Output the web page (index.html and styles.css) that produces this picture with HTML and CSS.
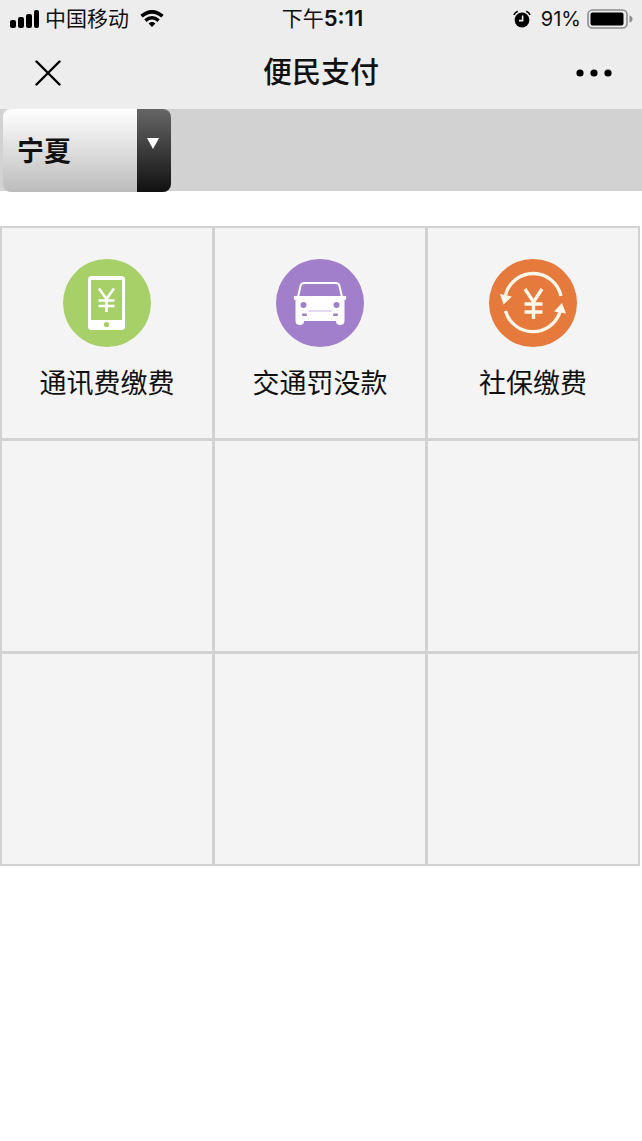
FILE: index.html
```
<!DOCTYPE html>
<html lang="zh-CN">
<head>
    <meta charset="UTF-8">
    <meta name="viewport" content="width=device-width, initial-scale=1.0">
    <title>便民支付</title>
    <link rel="stylesheet" href="styles.css">
</head>
<body>
    <header>
        <div class="status-bar">
            <div class="status-left">
                <svg class="signal" width="30" height="18" viewBox="0 0 30 18">
                    <rect x="0" y="10" width="6" height="8" rx="2"/>
                    <rect x="8" y="7" width="6" height="11" rx="2"/>
                    <rect x="16" y="4" width="6" height="14" rx="2"/>
                    <rect x="24" y="0" width="5" height="18" rx="2"/>
                </svg>
                <span>中国移动</span>
                <svg class="wifi" width="24" height="18" viewBox="0 0 24 18">
                    <path d="M1.5 6.2 Q12 -2.6 22.5 6.2" fill="none" stroke="#000" stroke-width="3.6"/>
                    <path d="M5.4 10.6 Q12 5 18.6 10.6" fill="none" stroke="#000" stroke-width="3.4"/>
                    <path d="M8.6 13.4 Q12 10.8 15.4 13.4 L12 17 Z"/>
                </svg>
            </div>
            <div class="status-time">下午<b>5:11</b></div>
            <div class="status-right">
                <svg class="alarm" width="18" height="18" viewBox="0 0 18 18">
                    <circle cx="9" cy="10" r="7.4"/>
                    <path d="M1 5 Q1.8 2.2 4.8 1.2 M17 5 Q16.2 2.2 13.2 1.2" fill="none" stroke="#000" stroke-width="1.6"/>
                    <path d="M9.6 5.6 V10.6 H6" fill="none" stroke="#ededed" stroke-width="1.6"/>
                </svg>
                <span class="percent">91%</span>
                <svg class="battery" width="46" height="20" viewBox="0 0 46 20">
                    <rect x="1" y="1" width="39" height="18" rx="4.5" fill="none" stroke="#8c8c8c" stroke-width="1.6"/>
                    <rect x="3.5" y="3.5" width="33" height="13" rx="2"/>
                    <path d="M42.5 6.5 Q45.5 7.5 45.5 10 Q45.5 12.5 42.5 13.5 Z" fill="#8c8c8c"/>
                </svg>
            </div>
        </div>
        <div class="nav-bar">
            <button type="button" class="close" aria-label="关闭">
                <svg width="26" height="26" viewBox="0 0 26 26">
                    <path d="M1.5 1.5 L24.5 24.5 M24.5 1.5 L1.5 24.5" stroke="#000" stroke-width="2.4" stroke-linecap="round"/>
                </svg>
            </button>
            <h1>便民支付</h1>
            <button type="button" class="more" aria-label="更多">
                <svg width="36" height="8" viewBox="0 0 36 8">
                    <circle cx="4" cy="4" r="3.6"/>
                    <circle cx="18" cy="4" r="3.6"/>
                    <circle cx="32" cy="4" r="3.6"/>
                </svg>
            </button>
        </div>
    </header>
    <div class="region-bar">
        <div class="region">
            <select id="region" aria-label="地区">
                <option selected>宁夏</option>
            </select>
            <span class="region-arrow">
                <svg width="12" height="11" viewBox="0 0 12 11"><path d="M0 0 H12 L6 11 Z" fill="#fff"/></svg>
            </span>
        </div>
    </div>
    <main class="grid">
        <a class="cell" href="#phone">
            <svg class="icon" viewBox="0 0 88 88">
                <circle cx="44" cy="44" r="44" fill="#a8d068"/>
                <rect x="25" y="17" width="37" height="54" rx="3.5" fill="#fff"/>
                <rect x="28" y="21" width="31" height="40" fill="#a8d068"/>
                <circle cx="43.5" cy="65.5" r="2.6" fill="#a8d068"/>
                <path d="M36 29.5 L43.5 40 L51 29.5 M43.5 40 V53 M35.5 41.5 H51.5 M35.5 47 H51.5" fill="none" stroke="#fff" stroke-width="2.6"/>
            </svg>
            <span>通讯费缴费</span>
        </a>
        <a class="cell" href="#traffic">
            <svg class="icon" viewBox="0 0 88 88">
                <circle cx="44" cy="44" r="44" fill="#a17fcb"/>
                <path d="M22 38 L24.5 27 Q25.2 24 28.5 24 H59.5 Q62.8 24 63.5 27 L66 38" fill="none" stroke="#fff" stroke-width="2"/>
                <path d="M18 37 H70 Q71 41 68.5 41 V62 Q68.5 66 64 66 Q60 66 60 62 H28 Q28 66 24 66 Q19.5 66 19.5 62 V41 Q17 41 18 37 Z" fill="#fff"/>
                <circle cx="27.5" cy="46" r="3" fill="#a17fcb"/>
                <circle cx="60.5" cy="46" r="3" fill="#a17fcb"/>
                <path d="M32 52 H56" stroke="#c7b3e1" stroke-width="1"/>
                <rect x="26" y="54.5" width="5" height="2.5" rx="1" fill="#a17fcb"/>
                <rect x="57" y="54.5" width="5" height="2.5" rx="1" fill="#a17fcb"/>
            </svg>
            <span>交通罚没款</span>
        </a>
        <a class="cell" href="#social">
            <svg class="icon" viewBox="0 0 88 88">
                <circle cx="44" cy="44" r="44" fill="#e67a3c"/>
                <g fill="none" stroke="#fff8ea" stroke-width="3.4">
                    <path d="M16.5 36 A28.5 28.5 0 0 1 72 37"/>
                    <path d="M16.5 52 A28.5 28.5 0 0 0 71 53"/>
                    <path d="M36 30 L44.5 43 L53 30 M44.5 43 V60 M35.5 45 H53.5 M35.5 53 H53.5"/>
                </g>
                <path d="M11 35 L23 37.5 L14.5 45.5 Z" fill="#fff8ea"/>
                <path d="M73 44 L77 54.5 L65 52.5 Z" fill="#fff8ea"/>
            </svg>
            <span>社保缴费</span>
        </a>
        <div class="cell"></div>
        <div class="cell"></div>
        <div class="cell"></div>
        <div class="cell"></div>
        <div class="cell"></div>
        <div class="cell"></div>
    </main>
</body>
</html>
```
FILE: styles.css
```
* {
    box-sizing: border-box;
}
body {
    font-family: Inter, "Noto Sans CJK SC", sans-serif;
    margin: 0;
    background: #fff;
    color: #111;
}
button {
    display: flex;
    padding: 0;
    border: none;
    background: none;
    cursor: pointer;
}
header {
    background: #ededed;
}
.status-bar {
    display: grid;
    grid-template-columns: 1fr auto 1fr;
    align-items: center;
    height: 36px;
    padding: 0 9px 0 10px;
    font-size: 21px;
    line-height: 36px;
}
.status-left,
.status-right {
    display: flex;
    align-items: center;
}
.status-left {
    gap: 5px;
}
.wifi {
    margin-left: 6px;
}
.status-time {
    padding-left: 2px;
}
.status-time b {
    font-size: 22px;
    font-weight: 600;
}
.status-right {
    justify-content: flex-end;
    gap: 6px;
}
.percent {
    margin-left: 4px;
    font-size: 20px;
}
.nav-bar {
    display: grid;
    grid-template-columns: 1fr auto 1fr;
    align-items: center;
    height: 73px;
    padding: 0 30px 2px;
}
.nav-bar h1 {
    margin: 0;
    font-size: 29px;
    font-weight: 500;
    line-height: 73px;
}
.close {
    margin-left: 5px;
}
.more {
    justify-self: end;
}
.region-bar {
    height: 82px;
    padding-left: 3px;
    background: #d2d2d2;
}
.region {
    position: relative;
    width: 168px;
    height: 83px;
    border-radius: 8px;
    overflow: hidden;
}
.region select {
    appearance: none;
    width: 100%;
    height: 100%;
    padding: 2px 40px 0 14px;
    border: none;
    border-radius: 0;
    background: linear-gradient(#fff, #bcbcbc);
    color: #111;
    font-family: inherit;
    font-size: 27px;
    font-weight: 700;
}
.region-arrow {
    position: absolute;
    top: 0;
    right: 0;
    display: flex;
    justify-content: center;
    width: 34px;
    height: 100%;
    padding: 29px 2px 0 0;
    background: linear-gradient(#666, #111);
    pointer-events: none;
}
.grid {
    display: grid;
    grid-template-columns: repeat(3, 1fr);
    gap: 3px;
    margin: 35px 2px 0 0;
    padding: 2px;
    background: #d2d2d2;
}
.cell {
    display: flex;
    flex-direction: column;
    align-items: center;
    gap: 17px;
    aspect-ratio: 1;
    padding-top: 31px;
    background: #f4f4f4;
    color: #111;
    font-size: 27px;
    line-height: 40px;
    text-decoration: none;
}
.icon {
    width: 88px;
    height: 88px;
}
```
